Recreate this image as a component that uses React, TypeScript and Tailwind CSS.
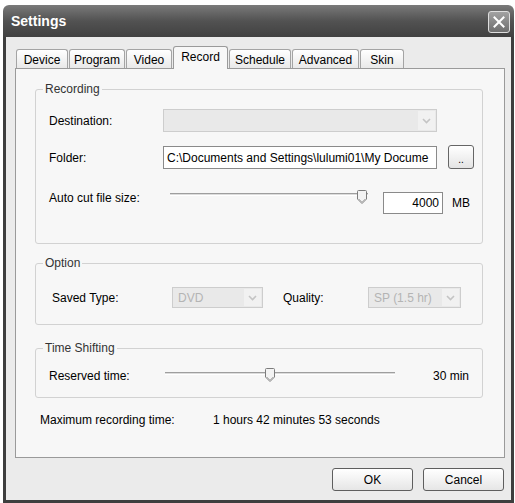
import type { ReactNode } from "react";

const TABS = [
  { label: "Device", w: "w-[52px]" },
  { label: "Program", w: "w-[56px]" },
  { label: "Video", w: "w-[46px]" },
  { label: "Record", w: "w-[55px]", active: true },
  { label: "Schedule", w: "w-[62px]" },
  { label: "Advanced", w: "w-[67px]" },
  { label: "Skin", w: "w-[44px]" },
];

function Chevron() {
  return (
    <svg width="9" height="6" viewBox="0 0 9 6">
      <path d="M1 1 L4.5 4.5 L8 1" fill="none" stroke="#c4c4c4" strokeWidth="1.6" />
    </svg>
  );
}

function Combo({ value, className }: { value?: string; className: string }) {
  return (
    <div className={`flex border border-[#cdcdcd] bg-[#e9e9e9] ${className}`}>
      <div className="flex flex-1 items-center overflow-hidden whitespace-nowrap pl-[5px] text-[#b4b4b4]">
        {value}
      </div>
      <div className="m-px flex w-[17px] items-center justify-center bg-[#f1f1f1]">
        <Chevron />
      </div>
    </div>
  );
}

function Thumb({ className }: { className: string }) {
  return (
    <svg className={`absolute ${className}`} width="10" height="14" viewBox="0 0 10 14">
      <path d="M0.5 1.5 Q0.5 0.5 1.5 0.5 H8.5 Q9.5 0.5 9.5 1.5 V9 L5 13.5 L0.5 9 Z" fill="#f3f3f3" stroke="#7c7c7c" />
      <path d="M2 9 L5 12 L8 9" fill="none" stroke="#b8b8b8" />
    </svg>
  );
}

function Track({ className, children }: { className: string; children?: ReactNode }) {
  return <div className={`relative shrink-0 ${className}`}>{children}</div>;
}

function Group({ title, className, children }: { title: string; className?: string; children: ReactNode }) {
  return (
    <fieldset className={`rounded-[3px] border border-[#d2d2d2] ${className ?? ""}`}>
      <legend className="ml-[7px] px-[2px] leading-[14px] text-[#333]">{title}</legend>
      {children}
    </fieldset>
  );
}

function Button({ children }: { children: ReactNode }) {
  return (
    <button
      type="button"
      className="h-[23px] w-[81px] rounded-[3px] border border-[#5e5e5e] bg-linear-to-b from-white to-[#e6e6e6] text-black"
    >
      {children}
    </button>
  );
}

export default function App() {
  return (
    <div className="h-[503px] w-[515px] overflow-hidden bg-white pl-[3px] pt-[5px] font-['Liberation_Sans',Arial,sans-serif] text-[12px] text-black">
      <div className="flex h-[498px] w-[511px] flex-col">
        {/* title bar */}
        <div className="flex h-[32px] shrink-0 items-center justify-between rounded-t-[6px] bg-linear-to-b from-[#7a7a7a] via-[#525252] to-[#414141] pl-[8px] pr-[4px]">
          <span className="text-[14px] font-bold text-white">Settings</span>
          <div className="mt-[1px] flex h-[22px] w-[22px] items-center justify-center rounded-[3px] border border-[#dedede] bg-linear-to-b from-[#a2a2a2] to-[#6f6f6f]">
            <svg width="12" height="12" viewBox="0 0 12 12">
              <path d="M1.5 1.5 L10.5 10.5 M10.5 1.5 L1.5 10.5" stroke="white" strokeWidth="2" strokeLinecap="square" />
            </svg>
          </div>
        </div>

        {/* client */}
        <div className="flex flex-1 flex-col border-x-[3px] border-b-[3px] border-[#3e3e3e] bg-[#ebebeb] pl-[9px] pr-[6px] pt-[9px]">
          <div className="ml-px flex items-end gap-px">
            {TABS.map((t) =>
              t.active ? (
                <div
                  key={t.label}
                  className={`relative z-10 -mb-px flex h-[23px] items-center justify-center rounded-t-[3px] border border-b-0 border-[#9a9a9a] bg-[#f7f7f7] pb-[2px] ${t.w}`}
                >
                  {t.label}
                </div>
              ) : (
                <div
                  key={t.label}
                  className={`flex h-[19px] items-center justify-center rounded-t-[3px] border border-b-0 border-[#a4a4a4] bg-linear-to-b from-white to-[#e9e9e9] pt-[2px] ${t.w}`}
                >
                  {t.label}
                </div>
              )
            )}
          </div>

          <div className="h-[390px] border border-[#9a9a9a] bg-[#f7f7f7] pl-[19px] pr-[21px] pt-[13px]">
            <Group title="Recording">
              <div className="pb-[29px] pl-[13px] pt-[13px]">
                <div className="flex h-[23px] items-center">
                  <span className="w-[114px] shrink-0">Destination:</span>
                  <Combo className="h-[23px] w-[274px]" />
                </div>
                <div className="mt-[14px] flex h-[23px] items-center">
                  <span className="w-[114px] shrink-0">Folder:</span>
                  <div className="flex h-[23px] w-[274px] items-center overflow-hidden whitespace-nowrap border border-[#8a8a8a] bg-white pl-[3px]">
                    C:\Documents and Settings\lulumi01\My Docume
                  </div>
                  <button
                    type="button"
                    className="-mt-px ml-[11px] flex h-[24px] w-[26px] items-end justify-center rounded-[3px] border border-[#666] bg-linear-to-b from-white to-[#e4e4e4] pb-[3px] text-[10px] leading-[10px]"
                  >
                    ..
                  </button>
                </div>
                <div className="mt-[21px] flex h-[24px] items-start">
                  <span className="mt-px w-[114px] shrink-0 leading-[14px]">Auto cut file size:</span>
                  <Track className="ml-[7px] h-[24px] w-[198px]">
                    <div className="absolute left-0 right-0 top-[3px] h-[3px] border-b border-t border-b-white border-t-[#9e9e9e] bg-[#dcdcdc]" />
                    <Thumb className="left-[187px] top-0" />
                  </Track>
                  <div className="ml-[15px] mt-[2px] flex h-[22px] w-[60px] items-center justify-end border border-[#8a8a8a] bg-white pr-[3px]">
                    4000
                  </div>
                  <span className="ml-[9px] mt-[6px] leading-[14px]">MB</span>
                </div>
              </div>
            </Group>

            <Group title="Option" className="mt-[12px]">
              <div className="flex items-center pb-[16px] pl-[16px] pt-[17px]">
                <span className="w-[120px] shrink-0">Saved Type:</span>
                <Combo value="DVD" className="h-[21px] w-[91px]" />
                <span className="ml-[20px] w-[85px] shrink-0">Quality:</span>
                <Combo value="SP (1.5 hr)" className="h-[21px] w-[93px]" />
              </div>
            </Group>

            <Group title="Time Shifting" className="mt-[16px]">
              <div className="flex h-[42px] items-start pl-[13px] pt-[11px]">
                <div className="flex h-[20px] items-center">
                  <span className="w-[116px] shrink-0">Reserved time:</span>
                  <Track className="h-[20px] w-[230px]">
                    <div className="absolute left-0 right-0 top-[6px] h-[3px] border-b border-t border-b-white border-t-[#9e9e9e] bg-[#dcdcdc]" />
                    <Thumb className="left-[100px] top-[2px]" />
                  </Track>
                  <span className="ml-[38px]">30 min</span>
                </div>
              </div>
            </Group>

            <div className="ml-[5px] mt-[15px] flex leading-[14px]">
              <span className="w-[173px] shrink-0">Maximum recording time:</span>
              <span>1 hours 42 minutes 53 seconds</span>
            </div>
          </div>

          <div className="mt-[10px] flex justify-end gap-[10px] pr-px">
            <Button>OK</Button>
            <Button>Cancel</Button>
          </div>
        </div>
      </div>
    </div>
  );
}
